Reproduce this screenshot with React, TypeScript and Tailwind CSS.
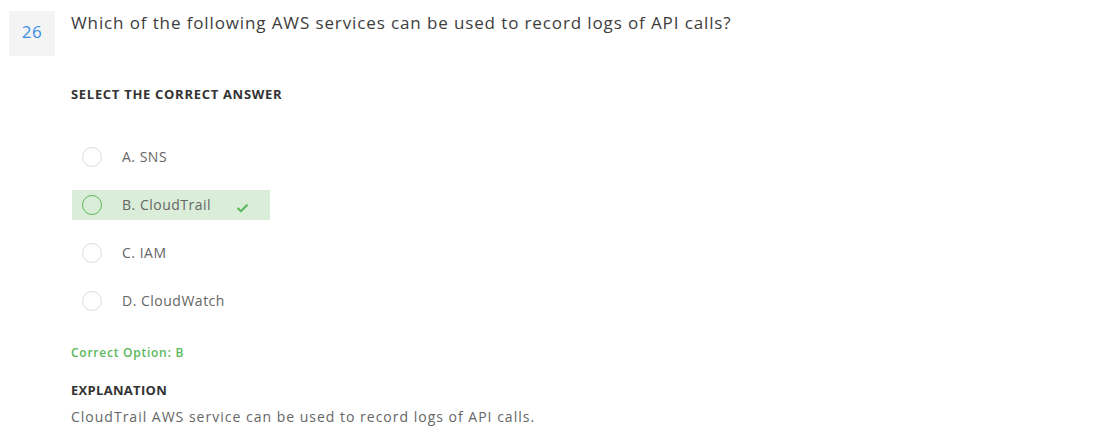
import { Check } from 'lucide-react';

const options = [
    { key: 'A', label: 'SNS' },
    { key: 'B', label: 'CloudTrail' },
    { key: 'C', label: 'IAM' },
    { key: 'D', label: 'CloudWatch' },
];

const correct = 'B';

export default function App() {
    return (
        <div
            className="min-h-screen bg-white pl-[9px] pt-[11px]"
            style={{ fontFamily: '"Open Sans", "Liberation Sans", sans-serif' }}
        >
            <div className="flex gap-4">
                <div className="flex h-[45px] w-[46px] shrink-0 items-center justify-center bg-[#f4f4f4] pb-[3px] text-[17px] tracking-[0.5px] text-[#3a8ee6]">
                    26
                </div>

                <div className="flex-1">
                    <h2 className="text-[17px] leading-6 tracking-[0.88px] text-[#3d3d3d]">
                        Which of the following AWS services can be used to record logs of API calls?
                    </h2>

                    <p className="mt-[49px] text-[13px] font-bold uppercase leading-5 tracking-[0.7px] text-[#333]">
                        Select the correct answer
                    </p>

                    <div className="ml-px mt-[38px] flex flex-col gap-[18px]">
                        {options.map((o) => {
                            const isCorrect = o.key === correct;
                            return (
                                <div
                                    key={o.key}
                                    className={`flex h-[30px] w-[198px] items-center pl-[10px] ${
                                        isCorrect ? 'bg-[#d9edd8]' : ''
                                    }`}
                                >
                                    <span
                                        className={`h-5 w-5 shrink-0 rounded-full border ${
                                            isCorrect
                                                ? 'border-[#5cb85c] bg-transparent'
                                                : 'border-[#dcdcdc] bg-white'
                                        }`}
                                    />
                                    <span className="ml-5 -translate-y-px text-[14px] tracking-[0.5px] text-[#666]">
                                        {o.key}. {o.label}
                                    </span>
                                    {isCorrect && (
                                        <Check
                                            className="ml-[25px] mt-[6px] h-[13px] w-[13px] text-[#5cb85c]"
                                            strokeWidth={4}
                                        />
                                    )}
                                </div>
                            );
                        })}
                    </div>

                    <p className="mt-[28px] text-[12px] font-semibold leading-[18px] tracking-[0.75px] text-[#5cb85c]">
                        Correct Option: {correct}
                    </p>

                    <p className="mt-[18px] text-[13px] font-bold uppercase leading-5 tracking-[0.3px] text-[#333]">
                        Explanation
                    </p>

                    <p className="mt-[7px] text-[14px] leading-5 tracking-[1px] text-[#666]">
                        CloudTrail AWS service can be used to record logs of API calls.
                    </p>
                </div>
            </div>
        </div>
    );
}
